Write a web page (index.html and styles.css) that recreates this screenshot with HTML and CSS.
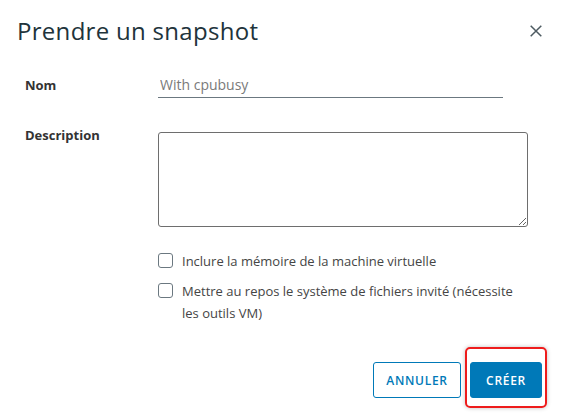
FILE: index.html
```html
<!DOCTYPE html>
<html lang="fr">
<head>
<meta charset="utf-8">
<link rel="stylesheet" href="styles.css">
</head>
<body>
<div class="modal">
  <div class="modal-header">
    <h3 class="modal-title">Prendre un snapshot</h3>
    <button class="close" aria-label="Fermer">
      <svg width="12" height="12" viewBox="0 0 12 12"><path d="M0.7 0.7 L11.3 11.3 M11.3 0.7 L0.7 11.3" stroke="#4d5a61" stroke-width="1.5" fill="none"/></svg>
    </button>
  </div>
  <div class="modal-body">
    <div class="form-row row-name">
      <label class="form-label">Nom</label>
      <div class="input-wrap"><input class="text-input" type="text" value="With cpubusy"></div>
    </div>
    <div class="form-row row-desc">
      <label class="form-label">Description</label>
      <textarea class="textarea"></textarea>
    </div>
    <div class="checks">
      <label class="check"><span class="box"></span><span class="check-text">Inclure la mémoire de la machine virtuelle</span></label>
      <label class="check"><span class="box"></span><span class="check-text">Mettre au repos le système de fichiers invité (nécessite les outils VM)</span></label>
    </div>
  </div>
  <div class="modal-footer">
    <button class="btn btn-outline">ANNULER</button>
    <span class="highlight-wrap">
      <button class="btn btn-primary">CRÉER</button>
      <span class="highlight"></span>
    </span>
  </div>
</div>
</body>
</html>
```
FILE: styles.css
```css
html, body {
  margin: 0;
  padding: 0;
  background: #ffffff;
}
body {
  font-family: "Open Sans", "Liberation Sans", sans-serif;
  color: #333333;
  width: 561px;
  height: 414px;
  overflow: hidden;
}
.modal {
  width: 561px;
  height: 414px;
  display: flex;
  flex-direction: column;
}
.modal-header {
  display: flex;
  align-items: flex-start;
  justify-content: space-between;
  padding: 15px 19px 0 17px;
  height: 45px;
  box-sizing: border-box;
}
.modal-title {
  margin: 0;
  font-size: 24px;
  font-weight: 400;
  line-height: 32px;
  color: #21333b;
  letter-spacing: 0.3px;
}
.close {
  background: none;
  border: 0;
  padding: 0;
  margin-top: 10px;
  width: 12px;
  height: 12px;
  display: flex;
}
.modal-body {
  padding: 0 0 0 25px;
}
.form-row {
  display: grid;
  grid-template-columns: 133px auto;
  align-items: start;
}
.row-name {
  margin-top: 31px;
}
.form-label {
  font-size: 13px;
  font-weight: 700;
  line-height: 18px;
  color: #333333;
}
.input-wrap {
  width: 345px;
}
.text-input {
  display: block;
  width: 100%;
  box-sizing: border-box;
  border: 0;
  border-bottom: 1px solid #6b7880;
  padding: 0 2px 4px;
  height: 22px;
  font-family: inherit;
  font-size: 14px;
  line-height: 17px;
  color: #7a7a7a;
  outline: none;
  margin: 0;
}
.row-desc {
  margin-top: 28px;
}
.textarea {
  width: 370px;
  height: 95px;
  box-sizing: border-box;
  border: 1px solid #6e6e6e;
  border-radius: 3px;
  margin-top: 6px;
  resize: both;
  font-family: inherit;
}
.checks {
  margin-left: 133px;
  margin-top: 23px;
  display: flex;
  flex-direction: column;
  gap: 8px;
}
.check {
  display: flex;
  align-items: flex-start;
  gap: 9px;
  font-size: 13px;
  line-height: 22px;
  color: #454545;
  width: 370px;
}
.box {
  flex: none;
  width: 15px;
  height: 15px;
  box-sizing: border-box;
  border: 1px solid #6b7880;
  border-radius: 3px;
  margin-top: 3px;
}
.check-text {
  margin-top: 0;
}
.modal-footer {
  display: flex;
  justify-content: flex-end;
  align-items: flex-start;
  gap: 9px;
  padding: 0 19px 0 0;
  margin-top: auto;
  margin-bottom: 16px;
}
.btn {
  height: 36px;
  box-sizing: border-box;
  border-radius: 3px;
  font-family: inherit;
  font-size: 12px;
  font-weight: 600;
  letter-spacing: 0.7px;
  padding: 0 12px;
  display: flex;
  align-items: center;
  justify-content: center;
}
.btn-outline {
  width: 88px;
  background: #ffffff;
  border: 1px solid #0079b8;
  color: #0079b8;
}
.btn-primary {
  width: 72px;
  background: #0079b8;
  border: 1px solid #0079b8;
  color: #ffffff;
}
.highlight-wrap {
  position: relative;
  display: block;
}
.highlight {
  position: absolute;
  left: -5px;
  top: -15px;
  width: 82px;
  height: 61px;
  box-sizing: border-box;
  border: 2px solid #ee1c1c;
  border-radius: 5px;
  box-shadow: 0 0 4px rgba(0,0,0,0.25);
  pointer-events: none;
}
```
